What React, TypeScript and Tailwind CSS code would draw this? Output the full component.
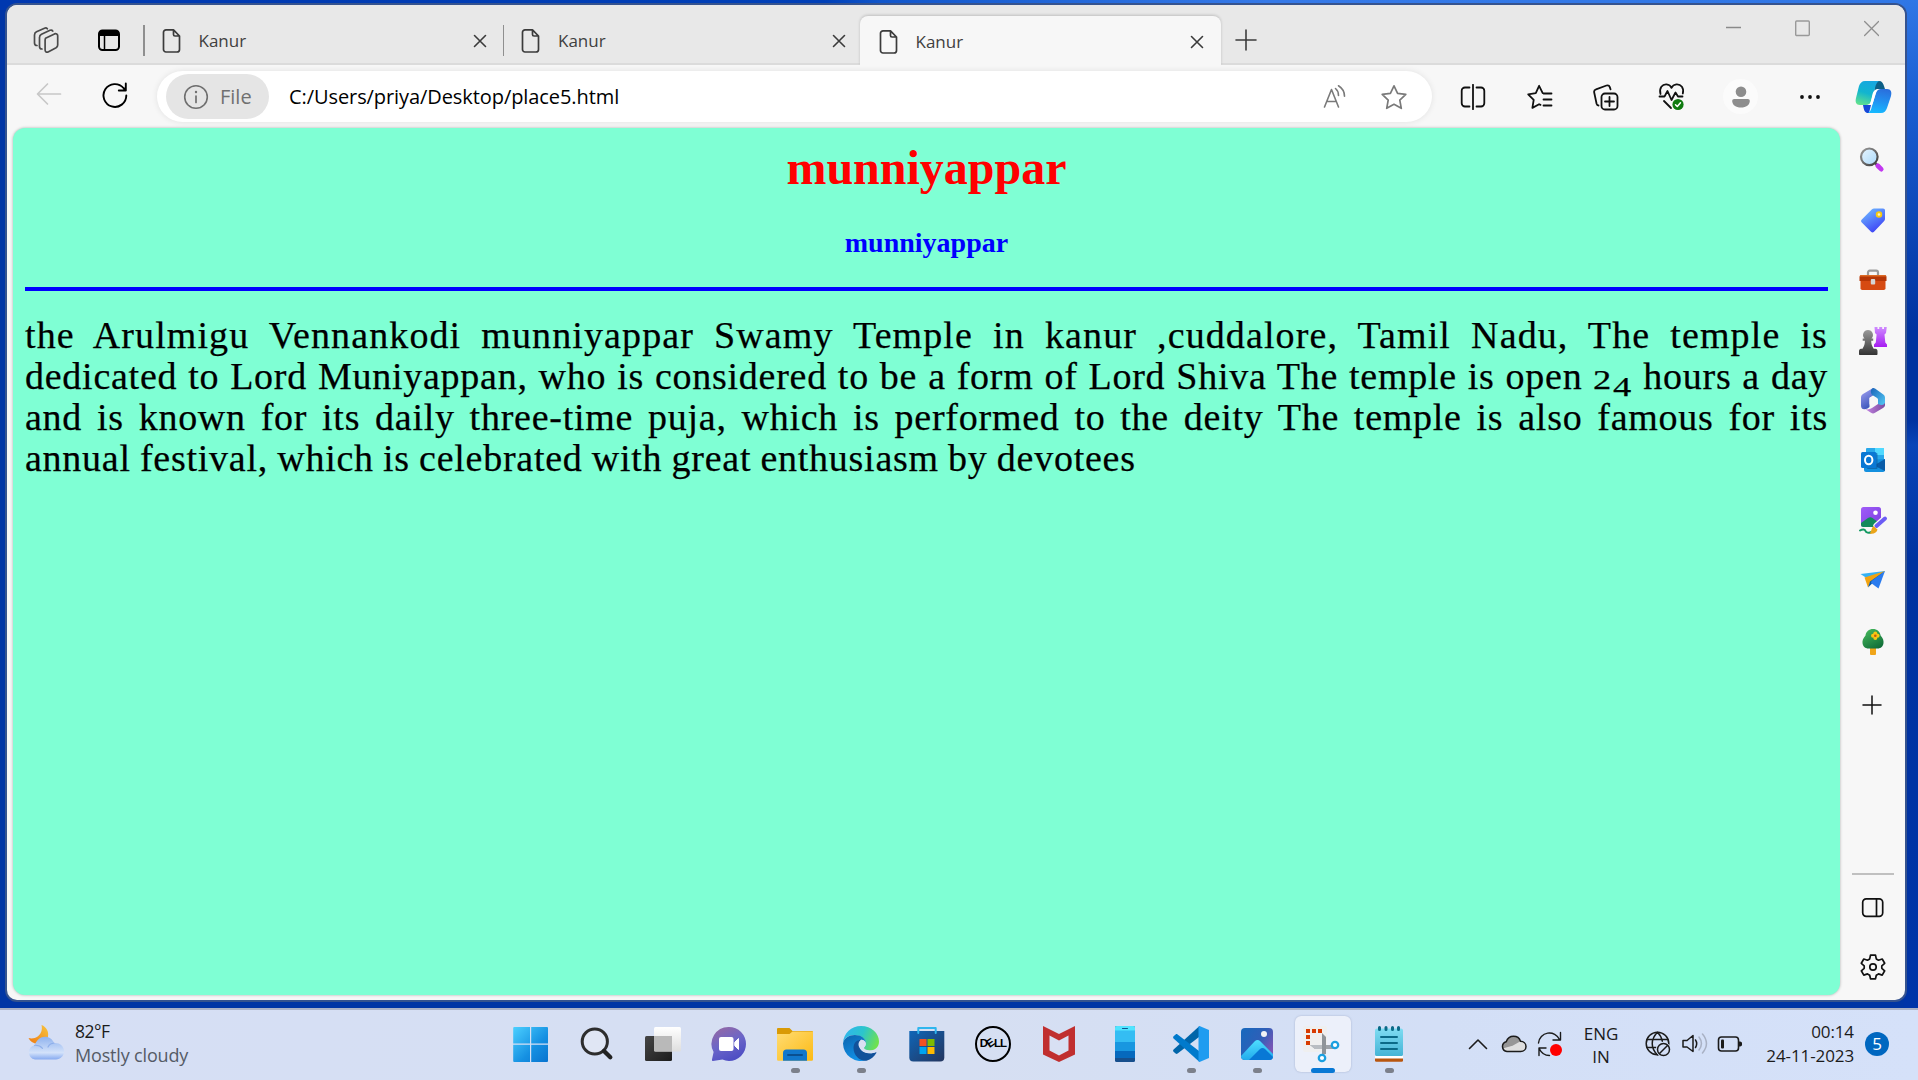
import React from "react";

type SvgProps = { w: number; h: number; className?: string; children: React.ReactNode };

const Svg = ({ w, h, className = "", children }: SvgProps) => (
  <svg
    width={w}
    height={h}
    viewBox={`0 0 ${w} ${h}`}
    fill="none"
    strokeLinecap="round"
    strokeLinejoin="round"
    className={`block shrink-0 ${className}`}
  >
    {children}
  </svg>
);

const UI_FONT = "font-['Open_Sans','Noto_Sans',sans-serif]";

/* ---------- tab strip ---------- */

const FileIcon = () => (
  <Svg w={20} h={26}>
    <path
      d="M4 1.8h7.5l6 6.2v13.500a2.500 2.500 0 0 1-2.500 2.500H4A2.500 2.500 0 0 1 1.500 21.500V4.300A2.500 2.500 0 0 1 4 1.800z M11.500 2v4.500a1.500 1.500 0 0 0 1.500 1.500h4.300"
      stroke="#3b3b3b"
      strokeWidth="1.7"
    />
  </Svg>
);

const TabClose = () => (
  <Svg w={14} h={14}>
    <path d="M1.500 1.500l11 11M12.500 1.500l-11 11" stroke="#3b3b3b" strokeWidth="1.6" />
  </Svg>
);

const TabBody = () => (
  <>
    <FileIcon />
    <span className="ml-[17px] flex-1 text-[17px] leading-6 text-[#3f3f3f]">Kanur</span>
    <TabClose />
  </>
);

const TabStrip = () => (
  <div className="flex h-[60px] items-start bg-[#e8e8e8] shadow-[inset_0_-2px_0_#dbdbdb]">
    <div className="flex h-full items-center pt-[11px]">
      <Svg w={27} h={28} className="ml-[26px]">
        <g stroke="#4a4a4a" strokeWidth="1.700">
          <path d="M12.500 11.200l9-4.300c1.600-.7 3.200.2 3.200 1.900v9.200c0 1.200-.6 2.100-1.600 2.700l-8 4.200c-1.500.7-3-.1-3-1.800v-9.500c0-1 .2-1.800.4-2.400z" />
          <path d="M9 22c-1.800 0-2.500-1-2.500-2.500v-9c0-1.600.6-2.500 2-3.200l8.500-4c1.200-.5 2.200-.2 2.800.8" />
          <path d="M4 18.500c-1.800 0-2.500-1-2.500-2.500V8c0-1.600.6-2.500 2-3.200L11.500 1.200c1.200-.5 2.200-.2 2.800.6" />
        </g>
      </Svg>
      <Svg w={24} h={23} className="ml-[37px]">
        <rect x="2" y="1.500" width="20" height="19.500" rx="3.500" stroke="#000" strokeWidth="2" />
        <path d="M2 4.500A3 3 0 0 1 5 1.500h14a3 3 0 0 1 3 3V7H2z" fill="#000" />
        <path d="M7.500 7v14" stroke="#000" strokeWidth="1.500" />
      </Svg>
      <div className="ml-[22px] h-[31px] w-[1.500px] bg-[#8f8f8f]" />
    </div>
    <div className="flex h-full w-[358px] items-center pl-[17px] pr-[16px] pt-[12px]">
      <TabBody />
    </div>
    <div className="flex h-full w-[357px] items-center pt-[11px]">
      <div className="h-[31px] w-[1.500px] bg-[#8f8f8f]" />
      <div className="flex flex-1 items-center pl-[17px] pr-[14px] pt-px">
        <TabBody />
      </div>
    </div>
    <div className="relative mt-[11px] flex h-[49px] w-[361px] items-center rounded-t-lg bg-[#f7f7f7] pl-[19px] pr-[17px] pt-[2px] shadow-[0_-1px_3px_rgba(0,0,0,0.18)] [clip-path:inset(-4px_-4px_0_-4px)]">
      <TabBody />
    </div>
    <Svg w={22} h={22} className="ml-[14px] mt-6">
      <path d="M11 1v20M1 11h20" stroke="#3b3b3b" strokeWidth="1.600" />
    </Svg>
    <div className="ml-auto mr-[26px] mt-[15px] flex gap-[54px]">
      <Svg w={15} h={17}>
        <path d="M0 7.500h15" stroke="#8a8a8a" strokeWidth="1.300" />
      </Svg>
      <Svg w={15} h={17}>
        <rect x=".7" y="1" width="13.600" height="14.500" rx="1" stroke="#999" strokeWidth="1.400" />
      </Svg>
      <Svg w={15} h={17}>
        <path d="M.6 1.500l14 14M14.600 1.500l-14 14" stroke="#8f8f8f" strokeWidth="1.300" />
      </Svg>
    </div>
  </div>
);

/* ---------- toolbar ---------- */

const CopilotIcon = () => (
  <Svg w={37} h={34}>
    <defs>
      <linearGradient id="cpA" x1=".6" y1="0" x2=".3" y2="1">
        <stop offset="0" stopColor="#17a7e0" />
        <stop offset=".5" stopColor="#12b5cf" />
        <stop offset="1" stopColor="#5fe08f" />
      </linearGradient>
      <linearGradient id="cpB" x1=".6" y1="0" x2=".4" y2="1">
        <stop offset="0" stopColor="#2a6fdc" />
        <stop offset=".5" stopColor="#2190f0" />
        <stop offset="1" stopColor="#16b9ff" />
      </linearGradient>
    </defs>
    <path d="M20 1h4c3 0 4 2 5 5l1 3h-6c-3 0-4 2-5 5z" fill="#0d5f86" />
    <path d="M8 25h8l-2 8h-1c-3 0-4-2-5-8z" fill="#1648d8" />
    <path d="M10 1h14c-2 1-3 3-4 7l-4 13c-1 3-2 4-5 4H5c-4 0-5-3-4-7L4 6c1-3 3-5 6-5z" fill="url(#cpA)" />
    <path d="M26 9h6c4 0 5 3 4 7l-4 12c-1 3-3 5-6 5H13c2-1 3-3 4-7l4-13c1-3 2-4 5-4z" fill="url(#cpB)" />
    <path d="M17.500 14c1-3 2.500-4.500 5-5h3c-3 0-4 2-5 5l-3 10c-.6 1-1 1-2 1h-3c2-.4 3-1.500 3.500-4z" fill="#fff" />
  </Svg>
);

const Toolbar = () => (
  <div className="flex h-[63px] items-center pb-[6px]">
    <Svg w={26} h={24} className="ml-[29px]">
      <path d="M24.500 12H2M11.500 2L1.500 12l10 10" stroke="#c8c8c8" strokeWidth="1.700" />
    </Svg>
    <Svg w={26} h={26} className="ml-[40px] mt-[2px]">
      <path d="M24.300 13.500A11.400 11.400 0 1 1 21.500 6l2.300 2.500M23.800 1.500v7h-7" stroke="#000" strokeWidth="1.900" />
    </Svg>
    <div className="mt-[6px] ml-[29px] flex h-[51px] w-[1275px] items-center rounded-full bg-white pl-[9px] shadow-[0_0_6px_rgba(0,0,0,0.09)]">
      <div className="flex h-[45px] w-[103px] items-center rounded-full bg-[#e5e5e5] pl-[17px]">
        <Svg w={26} h={26}>
          <circle cx="13" cy="13" r="11.300" stroke="#6f6f6f" strokeWidth="1.600" />
          <path d="M13 12v6.500" stroke="#6f6f6f" strokeWidth="1.700" />
          <circle cx="13" cy="8" r="1.200" fill="#6f6f6f" />
        </Svg>
        <span className="ml-[11px] text-[20px] leading-6 text-[#707070]">File</span>
      </div>
      <span className="ml-[20px] flex-1 text-[20px] leading-6 tracking-[-0.08px] text-black">
        C:/Users/priya/Desktop/place5.html
      </span>
      <Svg w={26} h={26}>
        <g stroke="#7a7a7a" strokeWidth="1.600">
          <path d="M2.500 23L9.500 5.500 16.500 23M5 17.500h9" />
          <path d="M13.500 4.500c2 1.600 3 4 3 7M16.500 1.800c3.800 2.400 6 6 6 10.500" />
        </g>
      </Svg>
      <Svg w={28} h={26} className="ml-[32px] mr-[24px]">
        <path
          d="M14 1.800l3.600 7.500 8.200 1.100-6 5.700 1.500 8.200L14 20.300l-7.300 4 1.500-8.200-6-5.700 8.200-1.100z"
          stroke="#7a7a7a"
          strokeWidth="1.700"
        />
      </Svg>
    </div>
    <div className="mt-[6px] flex items-center">
      <Svg w={26} h={26} className="ml-[28px]">
        <path
          d="M9.500 3.500H5A3.300 3.300 0 0 0 1.700 6.800v12.400A3.300 3.300 0 0 0 5 22.500h4.500M16.500 3.500H21a3.300 3.300 0 0 1 3.300 3.300v12.400a3.300 3.300 0 0 1-3.300 3.300h-4.500M13 .8v24.400"
          stroke="#111"
          strokeWidth="1.800"
        />
      </Svg>
      <Svg w={26} h={26} className="ml-[41px]">
        <path
          d="M17.500 9.500l-1.800-.3L12.100 1.800 8.800 9.100l-7.600 1.200 5.500 5.600-1.300 8 6.700-3.700 1.400.7M16.500 9.500h8M16.500 15.500h8M16.500 21.500h8"
          stroke="#111"
          strokeWidth="1.800"
        />
      </Svg>
      <Svg w={26} h={28} className="ml-[40px]">
        <g stroke="#111" strokeWidth="1.800">
          <rect x="8.500" y="10.500" width="16" height="16" rx="3.500" />
          <path d="M16.500 14v9M12 18.500h9" />
          <path d="M5.500 22.500c-1 0-1.600-.6-1.900-1.700L1.200 9.500c-.3-1.500.4-2.700 1.800-3.100L13.500 2.500c1.600-.5 2.800.1 3.300 1.600l.7 2.200" />
        </g>
      </Svg>
      <Svg w={28} h={30} className="ml-[39px]">
        <g stroke="#111" strokeWidth="1.800">
          <path d="M2.500 12C.8 6 4.500 2 8.500 2.300c2.500.2 4.200 1.500 5 3.500.9-2 2.700-3.300 5-3.500 4.500-.3 7.800 3.700 6.300 9.200" />
          <path d="M1.500 14.500h5l3-5.500 4 9 4-7.500 2.500 4h4.500" />
          <path d="M6 19l7 7" />
        </g>
        <circle cx="20" cy="22.500" r="5.600" fill="#0f7b10" />
        <path d="M17.500 22.700l1.800 1.800 3.200-3.800" stroke="#fff" strokeWidth="1.500" />
      </Svg>
      <div className="ml-[37px] flex size-[35px] items-center justify-center rounded-full bg-[#fbfbfb]">
        <Svg w={18} h={22}>
          <circle cx="9" cy="5.800" r="5.300" fill="#8d8d8d" />
          <path d="M2.200 13h13.600a2 2 0 0 1 2 2.200c-.3 3.800-3.500 6.300-8.800 6.300S.5 19 .2 15.200a2 2 0 0 1 2-2.200z" fill="#8d8d8d" />
        </Svg>
      </div>
      <Svg w={22} h={6} className="ml-[41px]">
        <circle cx="3" cy="3" r="1.900" fill="#111" />
        <circle cx="11" cy="3" r="1.900" fill="#111" />
        <circle cx="19" cy="3" r="1.900" fill="#111" />
      </Svg>
      <div className="ml-[34px]">
        <CopilotIcon />
      </div>
    </div>
  </div>
);

/* ---------- page ---------- */

const LineRow = ({ children }: { children: React.ReactNode }) => (
  <span className="block h-[41px] whitespace-nowrap [text-align-last:justify]">{children}</span>
);

const Page = () => (
  <main className="h-[867px] w-[1827px] rounded-xl bg-[#7fffd4] px-3 shadow-[0_0_3px_rgba(0,0,0,0.3)] font-['Liberation_Serif',serif]">
    <h1 className="pt-[12px] text-center text-[48px] font-bold leading-[56px] text-[#ff0000]">munniyappar</h1>
    <h3 className="mt-[31px] text-center text-[28px] font-bold leading-8 text-[#0000ff]">munniyappar</h3>
    <hr className="mt-[28px] h-1 border-0 bg-[#0000ff]" />
    <p className="mt-[24px] text-[38px] leading-[41px] tracking-[0.74px] text-black [word-spacing:-1px] [-webkit-text-stroke:0.25px_black]">
      <LineRow>
        <span className="tracking-[1.1px]">
          the Arulmigu Vennankodi munniyappar Swamy Temple in kanur ,cuddalore, Tamil Nadu, The temple is
        </span>
      </LineRow>
      <LineRow>
        dedicated to Lord Muniyappan, who is considered to be a form of Lord Shiva The temple is open{" "}
        <span className="inline-flex items-baseline text-[27px] leading-none tracking-normal">
          <span className="block w-[20px] origin-left scale-x-[1.35]">2</span>
          <span className="relative top-[7px] block w-[19px] origin-left scale-x-[1.35]">4</span>
        </span>{" "}
        hours a day
      </LineRow>
      <LineRow>and is known for its daily three-time puja, which is performed to the deity The temple is also famous for its</LineRow>
      <span className="block whitespace-nowrap">
        annual festival, which is celebrated with great enthusiasm by devotees
      </span>
    </p>
  </main>
);

/* ---------- sidebar ---------- */

const SideSearch = () => (
  <Svg w={28} h={28}>
    <defs>
      <linearGradient id="ssR" x1="0" y1="0" x2="1" y2="1"><stop stopColor="#9a9a9a" /><stop offset="1" stopColor="#3c3c3c" /></linearGradient>
      <linearGradient id="ssG" x1="0" y1="0" x2="1" y2="1"><stop stopColor="#e8f5ff" /><stop offset="1" stopColor="#a9d9fa" /></linearGradient>
    </defs>
    <path d="M16 17l3 3" stroke="#555" strokeWidth="2.500" />
    <path d="M18.800 19.800l3.400 3.300" stroke="#c239f0" strokeWidth="4.800" />
    <circle cx="10.300" cy="10.800" r="8.300" fill="url(#ssG)" stroke="url(#ssR)" strokeWidth="2.200" />
  </Svg>
);
const SideTag = () => (
  <Svg w={28} h={28}>
    <defs><linearGradient id="stG" x1=".2" y1=".1" x2=".7" y2="1"><stop stopColor="#6ab0ff" /><stop offset="1" stopColor="#3b3df5" /></linearGradient></defs>
    <path d="M15 2.500h9c1.300 0 2 .7 2 2V13c0 .8-.3 1.500-.8 2L15 25.700c-1 1-2 1-3 0l-9.200-9.300c-1-1-1-2 0-3L13 3.300c.6-.6 1.200-.8 2-.8z" fill="url(#stG)" />
    <circle cx="20" cy="8.500" r="2.300" stroke="#f8c90e" strokeWidth="1.900" fill="#fff4c0" />
  </Svg>
);
const SideTools = () => (
  <Svg w={28} h={28}>
    <path d="M9 10V6.500A1.800 1.800 0 0 1 10.800 4.700h6.400A1.800 1.800 0 0 1 19 6.500V10" stroke="#9b9b9b" strokeWidth="2.200" />
    <rect x="1.500" y="10" width="25" height="14" rx="1.800" fill="#d64a12" />
    <path d="M2.500 9h23a2 2 0 0 1 2 2v4H.5v-4a2 2 0 0 1 2-2z" fill="#b53606" />
    <path d="M2.500 9h23a2 2 0 0 1 1.900 1.400H.6A2 2 0 0 1 2.500 9z" fill="#dd6a24" />
    <rect x="11.800" y="13" width="4.400" height="5.500" rx="1" fill="#d5d5d5" />
  </Svg>
);
const SideGames = () => (
  <Svg w={28} h={28}>
    <defs>
      <linearGradient id="sgP" x1="0" y1="0" x2="0" y2="1"><stop stopColor="#9a9a9a" /><stop offset="1" stopColor="#333" /></linearGradient>
      <linearGradient id="sgR" x1="0" y1="0" x2="0" y2="1"><stop stopColor="#cf8cff" /><stop offset="1" stopColor="#a61df2" /></linearGradient>
    </defs>
    <path d="M15.500 0h3v2h1.700V0h3v2H25V0h2.800l-.8 6-1.500 1.500.8 8 1.700 2V20H15v-2.500l1.800-2 .8-8L16 6z" fill="url(#sgR)" />
    <path d="M9 3a5 5 0 0 1 3.500 8.500h1.700v2.300h-2c0 3 .8 5.500 2.500 8h1.800c1.300 0 2 1 2 2.300V27c0 .6-.4 1-1 1H1c-.6 0-1-.4-1-1v-2.900c0-1.300.8-2.300 2-2.300h1.500c1.700-2.500 2.400-5 2.400-8H3.700v-2.300h1.800A5 5 0 0 1 9 3z" fill="url(#sgP)" />
  </Svg>
);
const Side365 = () => (
  <Svg w={28} h={28}>
    <defs>
      <linearGradient id="m3A" x1="0" y1="0" x2=".5" y2="1"><stop stopColor="#a8a5f5" /><stop offset="1" stopColor="#3552b8" /></linearGradient>
      <linearGradient id="m3B" x1="0" y1="0" x2="1" y2="1"><stop stopColor="#1a63b8" /><stop offset="1" stopColor="#57d1fa" /></linearGradient>
      <linearGradient id="m3C" x1="0" y1="0" x2="1" y2="0"><stop stopColor="#cf8ff0" /><stop offset="1" stopColor="#7b4a9d" /></linearGradient>
    </defs>
    <path d="M14 1l-10 6c-1.400.8-2 2-2 3.500v8c0 3 2 5 6.500 3l2-1.500v-9L18 6.500z" fill="url(#m3A)" />
    <path d="M14 1c-3 1.500-3 5 0 8l5 3.200v6c0 3 4 4 7 .5v-8c0-1.500-.6-2.700-2-3.500L16 1.500c-.7-.4-1.300-.6-2-.5z" fill="url(#m3B)" />
    <path d="M3 20l9 5.800c1.400.8 2.700.8 4 0l8-4.800c1.400-.8 2-2 2-3.500v-2c-1 3-4 3-7 1.500l-6 4c-3 2-7 2-10-1z" fill="url(#m3C)" />
    <path d="M10.500 10.700l3.500-2.200 4.500 2.700v5.300L14 19.300l-3.500-2z" fill="#f7f7f7" />
  </Svg>
);
const SideOutlook = () => (
  <Svg w={28} h={28}>
    <rect x="7" y="1" width="18" height="15" rx="1" fill="#28a8ea" />
    <path d="M16 1h9v7h-9z" fill="#50d9ff" />
    <path d="M5 13l21-1v11a2 2 0 0 1-2 2H7a2 2 0 0 1-2-2z" fill="#1490df" />
    <path d="M26 12v12l-11-5.500z" fill="#0a5ca8" />
    <rect x="8" y="6" width="10.500" height="16" rx="1" fill="#064a86" opacity=".5" />
    <rect x="2" y="5" width="15.500" height="16" rx="1.500" fill="#0a78d4" />
    <ellipse cx="9.700" cy="13" rx="3.700" ry="4.200" stroke="#fff" strokeWidth="2" />
  </Svg>
);
const SideImage = () => (
  <Svg w={30} h={28}>
    <defs><linearGradient id="siG" x1="0" y1="0" x2="1" y2="1"><stop stopColor="#a05cf8" /><stop offset="1" stopColor="#7b3fe0" /></linearGradient></defs>
    <rect x="3" y="0" width="20" height="20" rx="2.500" fill="url(#siG)" />
    <path d="M3 16l7-5c1.500-1 3-1 4.500 0l6 4.500-2 4.500h-13A2.500 2.500 0 0 1 3 17.500z" fill="#118a5b" />
    <circle cx="17.500" cy="5.700" r="2.300" fill="#fff" />
    <path d="M2 23.500c3-2 5-1 5.500.5s3 2.500 6 1" stroke="#129962" strokeWidth="2" />
    <path d="M18.500 19l8.500-7.500" stroke="#f7f7f7" strokeWidth="6.500" />
    <path d="M18.500 19l8.500-7.500" stroke="#6b5cf5" strokeWidth="4" />
    <path d="M15.500 19l4 3.500c-.5 3-4 5-8 4 2-1.500 1.500-5 4-7.500z" fill="#eba51a" />
  </Svg>
);
const SideDrop = () => (
  <Svg w={28} h={28}>
    <g transform="translate(0 -1)">
      <path d="M1.500 8L26 5 13 15 7.500 12z" fill="#35b1f2" />
      <path d="M26 5L5.500 11.500l3.500 10 2-5z" fill="#f2a30f" />
      <path d="M26 5L11 15.500l-2 6z" fill="#0b58a8" />
      <path d="M26 5L12.500 15l-.5 2 7.500 5.500z" fill="#2a7bee" />
    </g>
  </Svg>
);
const SideTree = () => (
  <Svg w={28} h={28}>
    <defs><linearGradient id="trG" x1=".2" y1="0" x2=".8" y2="1"><stop stopColor="#44b85c" /><stop offset="1" stopColor="#0f6b37" /></linearGradient></defs>
    <rect x="11" y="19" width="6" height="8" rx="1" fill="#f0a51a" />
    <path d="M14 1c4 0 7 2.500 7.600 6.500C24 10 24.800 12.500 24.500 15c-.4 3.300-2.500 5.500-6 5.500h-9c-3.500 0-5.600-2.200-6-5.500-.3-2.500.7-5 3-7.500C7 3.500 10 1 14 1z" fill="url(#trG)" />
    <g fill="#f9c513"><circle cx="16.300" cy="5.500" r="2" /><circle cx="18.600" cy="7.800" r="2" /><circle cx="16.300" cy="10.100" r="2" /><circle cx="14" cy="7.800" r="2" /></g>
    <circle cx="16.300" cy="7.800" r="1.300" fill="#c65a11" />
  </Svg>
);

const Sidebar = () => (
  <aside className="flex h-[872px] flex-1 flex-col items-center">
    <div className="flex flex-col items-center gap-[32.200px] pt-[18px]">
      <SideSearch />
      <SideTag />
      <SideTools />
      <SideGames />
      <Side365 />
      <SideOutlook />
      <SideImage />
      <SideDrop />
      <SideTree />
      <Svg w={20} h={20} className="mr-[2px] mt-[7px]">
        <path d="M10 1v18M1 10h18" stroke="#111" strokeWidth="1.500" />
      </Svg>
    </div>
    <div className="mt-auto h-[2px] w-[42px] bg-[#c0c0c0]" />
    <Svg w={24} h={22} className="mt-[22px]">
      <rect x="1.700" y="1.800" width="20" height="17.500" rx="3.500" stroke="#111" strokeWidth="1.700" />
      <path d="M15.500 2v17" stroke="#111" strokeWidth="1.700" />
    </Svg>
    <Svg w={26} h={26} className="mb-[20px] mt-[35px]">
      <g stroke="#111" strokeWidth="1.700">
        <path d="M10.500 1.200h5l.8 3.700 2.200 1.300 3.700-1.200 2.500 4.300-2.900 2.500v2.500l2.900 2.500-2.500 4.300-3.700-1.200-2.200 1.300-.8 3.600h-5l-.8-3.600-2.200-1.300-3.700 1.200-2.500-4.300 2.900-2.500v-2.500L1.300 9.300 3.800 5l3.700 1.200 2.200-1.300z" />
        <circle cx="13" cy="13" r="3.200" />
      </g>
    </Svg>
  </aside>
);

/* ---------- taskbar ---------- */

const Start = () => (
  <Svg w={36} h={36}>
    <defs><linearGradient id="wnG" x1="0" y1="0" x2="1" y2="1" ><stop stopColor="#4cd0ff" /><stop offset=".6" stopColor="#1590e2" /><stop offset="1" stopColor="#0873cf" /></linearGradient></defs>
    <path d="M1.200 1H17v16.500H.2V2a1 1 0 0 1 1-1zM18.200 1H34a1 1 0 0 1 1 1v15.500H18.200zM.2 18.700H17V36H1.200a1 1 0 0 1-1-1zM18.200 18.700H35V35a1 1 0 0 1-1 1H18.200z" fill="url(#wnG)" />
  </Svg>
);
const TaskSearch = () => (
  <Svg w={36} h={36}>
    <circle cx="15.800" cy="15.500" r="12.600" stroke="#2d2d2d" strokeWidth="3" fill="#e0e6f4" />
    <path d="M25 25l6.300 6.300" stroke="#222" strokeWidth="4.300" />
  </Svg>
);
const TaskView = () => (
  <Svg w={36} h={36}>
    <defs>
      <linearGradient id="tvA" x1="0" y1="0" x2="1" y2="1"><stop stopColor="#454545" /><stop offset="1" stopColor="#1c1c1c" /></linearGradient>
      <linearGradient id="tvB" x1="0" y1="0" x2="0" y2="1"><stop stopColor="#fff" /><stop offset="1" stopColor="#dedede" /></linearGradient>
    </defs>
    <rect x="0" y="10" width="27" height="25" rx="1.500" fill="url(#tvA)" />
    <rect x="9" y="1" width="27" height="24.500" rx="1.500" fill="url(#tvB)" />
    <path d="M9 10h18v15.500H10.500A1.500 1.500 0 0 1 9 24z" fill="#b9b9b9" />
  </Svg>
);
const Chat = () => (
  <Svg w={36} h={36}>
    <defs><linearGradient id="chG" x1=".1" y1=".1" x2=".5" y2="1"><stop stopColor="#9068a8" /><stop offset=".5" stopColor="#6b66c8" /><stop offset="1" stopColor="#4f4fc4" /></linearGradient></defs>
    <path d="M18 1a17 17 0 1 1 0 34c-2.500 0-4.500-.5-6.500-1.400L2 35c-.8 0-1.200-.6-1-1.400l1.600-7.500A17 17 0 0 1 18 1z" fill="url(#chG)" />
    <rect x="8" y="11" width="14.500" height="14" rx="2" fill="#fff" />
    <path d="M24 16l3.500-3.500V23.500L24 20z" fill="#fff" stroke="#fff" strokeWidth="1" />
  </Svg>
);
const Folder = () => (
  <Svg w={36} h={36}>
    <defs><linearGradient id="foG" x1="0" y1="0" x2="1" y2="1"><stop stopColor="#ffdc73" /><stop offset="1" stopColor="#fcba14" /></linearGradient></defs>
    <path d="M0 3a1 1 0 0 1 1-1h11.500l3 3H35a1 1 0 0 1 1 1v8H0z" fill="#d99a05" />
    <path d="M0 8h12.500l3-2.500H36v28a1.200 1.200 0 0 1-1.200 1.200H1.200A1.200 1.200 0 0 1 0 33.500z" fill="url(#foG)" />
    <path d="M6 34.700V27a3.500 3.500 0 0 1 3.500-3.500h17A3.500 3.500 0 0 1 30 27v7.700z" fill="#1177cc" />
    <path d="M11 29h14" stroke="#0a4f90" strokeWidth="2" />
  </Svg>
);
const Edge = () => (
  <Svg w={36} h={36}>
    <defs>
      <linearGradient id="edA" x1="0" y1=".3" x2="1" y2=".6"><stop stopColor="#2fb5ee" /><stop offset=".5" stopColor="#2cc5cc" /><stop offset="1" stopColor="#70e24b" /></linearGradient>
      <linearGradient id="edB" x1="0" y1="0" x2=".4" y2="1"><stop stopColor="#0c63ad" /><stop offset="1" stopColor="#1290e5" /></linearGradient>
    </defs>
    <path d="M0 17C.5 7 8.500 0 18 0c10.500 0 18 7.500 18 15.500 0 5.500-4 9-8.500 9-3.500 0-6.500-1-6.500-2.500 0-1 1.800-1.500 1.800-4.500 0-5-5-8.500-11-8.500C5.500 9 1 12.500 0 17z" fill="url(#edA)" />
    <path d="M0 17.500C1 12 6 9 11.800 9c6.200 0 11 3.500 11 8-1.400-2.300-3-3.200-4.500-3.200-3.300 0-6.300 3.700-6.300 8 0 6 4.500 11.700 11 12.500A18 18 0 0 1 0 17.500z" fill="url(#edB)" />
    <path d="M18 13.800c-5 0-7.500 4-7.500 8.200 0 7.500 6.500 13.500 13 12.800 4.500-1.500 7.800-4.300 9.800-7.800.4-.7-.1-1-.8-.7-1.800.7-3.300 1-5.200 1-6 0-11-3.500-11-8.500 0-2 .7-4 1.700-5z" fill="#11519a" />
    <path d="M18.300 13.800c-3 1.500-3.500 5-1.800 8 2 3.800 6 5.500 10.500 5.500 2 0 4-.4 5.500-1l.5-2.500c-2 .6-3.700.8-5.500.7-3.500 0-6.500-1-6.500-2.500 0-1 1.800-1.500 1.800-4.500 0-2-2-3.700-4.500-3.700z" fill="#d8e0f3" />
  </Svg>
);
const Store = () => (
  <Svg w={36} h={36}>
    <defs><linearGradient id="msG" x1="0" y1="0" x2="1" y2="1"><stop stopColor="#0f66b8" /><stop offset="1" stopColor="#24355e" /></linearGradient></defs>
    <path d="M.3 5h35v26.500a4 4 0 0 1-4 4h-27a4 4 0 0 1-4-4z" fill="url(#msG)" />
    <path d="M9.300 7V2h17.400v5" stroke="#2fb6ee" strokeWidth="2" />
    <path d="M10.500 13h7v7h-7z" fill="#f25022" /><path d="M18.500 13h7v7h-7z" fill="#7fba00" />
    <path d="M10.500 21h7v7h-7z" fill="#00a4ef" /><path d="M18.500 21h7v7h-7z" fill="#ffb900" />
  </Svg>
);
const Dell = () => (
  <div className="flex size-9 items-center justify-center rounded-full border-2 border-black font-['Liberation_Sans',sans-serif] text-[11.500px] font-bold leading-none tracking-[-0.9px] text-black">
    <span>D</span><span className="-rotate-[35deg]">E</span><span>LL</span>
  </div>
);
const McAfee = () => (
  <Svg w={36} h={36}>
    <path d="M2 0l16 8L34 0v28.500L18 36 2 28.500z" fill="#c02f2f" />
    <path d="M8.500 9.500L18 14.500l9.500-5v15L18 29.500l-9.500-5z" fill="#d8e0f3" />
  </Svg>
);
const Phone = () => (
  <Svg w={36} h={36}>
    <rect x="8" y="0" width="20" height="36" rx="1.500" fill="#174f8c" />
    <path d="M8 25h20v7H8z" fill="#0669bd" /><path d="M8 16h20v9H8z" fill="#1897e0" />
    <path d="M8 4h20v12H8z" fill="#34bdf3" /><path d="M9.500 0h17A1.500 1.500 0 0 1 28 1.500V4.500H8V1.500A1.500 1.500 0 0 1 9.500 0z" fill="#50e4ff" />
    <path d="M15.500 2.500h5" stroke="#14568f" strokeWidth="1" />
  </Svg>
);
const VSCode = () => (
  <Svg w={36} h={36}>
    <path d="M26.500 0L.6 23.600c-.7.7-.7 1.500 0 2.200l2 1.800c.6.5 1.300.5 2 0L26 11z" fill="#0065a9" />
    <path d="M26.500 36L.6 12.400c-.7-.7-.7-1.500 0-2.200l2-1.800c.6-.5 1.300-.5 2 0L26 25z" fill="#007acc" />
    <path d="M26.500 0L36 4v28l-9.500 4c-.8-.4-1-.9-1-1.500v-33c0-.6.200-1.100 1-1.500z" fill="#1f9cf0" />
  </Svg>
);
const Photos = () => (
  <Svg w={36} h={36}>
    <defs>
      <linearGradient id="phA" x1="0" y1="0" x2="1" y2=".6"><stop stopColor="#1769bd" /><stop offset=".6" stopColor="#2f5fb8" /><stop offset="1" stopColor="#7b55b5" /></linearGradient>
      <linearGradient id="phB" x1=".4" y1="0" x2=".5" y2="1"><stop stopColor="#4fe0ff" /><stop offset="1" stopColor="#1ba3ea" /></linearGradient>
      <clipPath id="phC"><rect x="2" y="2" width="32" height="32" rx="4" /></clipPath>
    </defs>
    <g clipPath="url(#phC)">
      <rect x="2" y="2" width="32" height="32" fill="url(#phA)" />
      <path d="M2 30L16 15c1.500-1.500 3.500-1.500 5 0l15 15v6H2z" fill="url(#phB)" />
      <path d="M8 36l13-13c1.500-1.500 3.500-1.500 5 0l9 9v4z" fill="#0878d5" />
    </g>
    <circle cx="25" cy="8" r="3" fill="#f1f2f5" />
  </Svg>
);
const Snip = () => (
  <Svg w={40} h={38}>
    <rect x="0" y="1" width="24" height="26" rx="2" fill="#efefef" />
    <path d="M3 4h4v4H3zM9 4h4v4H9zM15 4h4v4h-4zM3 10h4v4H3zM3 16h4v4H3z" fill="#d83b01" />
    <path d="M19 8l4 4v17l-4 1z" fill="#8f9499" />
    <path d="M7 20h23v4H12z" fill="#8f9499" opacity=".85" />
    <path d="M7 20h12v4h-7z" fill="#b9bdc2" />
    <circle cx="32" cy="20" r="3.200" stroke="#1a9fe0" strokeWidth="2.300" fill="#fff" />
    <circle cx="19" cy="33" r="3.200" stroke="#1a9fe0" strokeWidth="2.300" fill="#fff" />
  </Svg>
);
const Notepad = () => (
  <Svg w={36} h={36}>
    <defs><linearGradient id="npG" x1="0" y1="0" x2="0" y2="1"><stop stopColor="#7fdcf2" /><stop offset="1" stopColor="#45b4d6" /></linearGradient></defs>
    <path d="M4 30h28v4.500a1.300 1.300 0 0 1-1.300 1.300H5.300A1.300 1.300 0 0 1 4 34.500z" fill="#b8560f" />
    <path d="M4 28h28v4.500H4z" fill="#fff" />
    <path d="M6 2.500h24a2 2 0 0 1 2 2v24a1.500 1.500 0 0 1-1.500 1.500h-25A1.500 1.500 0 0 1 4 28.500v-24a2 2 0 0 1 2-2z" fill="url(#npG)" />
    <path d="M8.500 1.500v2M15 1.500v2M21.500 1.500v2M27.500 1.500v2" stroke="#0b6a88" strokeWidth="3" />
    <path d="M10 11h16M10 17h16M10 23h16" stroke="#0b6a88" strokeWidth="2" />
  </Svg>
);

type App = { name: string; icon: React.ReactNode; state?: "open" | "active" };

const apps: App[] = [
  { name: "start", icon: <Start /> },
  { name: "search", icon: <TaskSearch /> },
  { name: "taskview", icon: <TaskView /> },
  { name: "chat", icon: <Chat /> },
  { name: "explorer", icon: <Folder />, state: "open" },
  { name: "edge", icon: <Edge />, state: "open" },
  { name: "store", icon: <Store /> },
  { name: "dell", icon: <Dell /> },
  { name: "mcafee", icon: <McAfee /> },
  { name: "phone", icon: <Phone /> },
  { name: "vscode", icon: <VSCode />, state: "open" },
  { name: "photos", icon: <Photos />, state: "open" },
  { name: "snip", icon: <Snip />, state: "active" },
  { name: "notepad", icon: <Notepad />, state: "open" },
];

const TaskItem = ({ icon, state }: App) => (
  <div className="flex h-full w-[66px] items-center justify-center">
    <div
      className={`relative flex size-14 items-center justify-center rounded-md ${
        state === "active" ? "bg-[#ecf0fa] shadow-[0_0_2px_rgba(90,100,140,0.4)]" : ""
      }`}
    >
      {icon}
      {state === "open" && <div className="absolute bottom-[-1px] h-[5px] w-[9px] rounded-full bg-[#7c808b]" />}
      {state === "active" && <div className="absolute bottom-[-1px] h-[5px] w-6 rounded-full bg-[#0878d4]" />}
    </div>
  </div>
);

const Weather = () => (
  <Svg w={38} h={38}>
    <defs>
      <linearGradient id="weM" x1="1" y1="0" x2="0" y2="1"><stop stopColor="#f7c53f" /><stop offset="1" stopColor="#f07a12" /></linearGradient>
      <linearGradient id="weC" x1="0" y1="0" x2="0" y2="1"><stop stopColor="#8fb2ee" /><stop offset=".7" stopColor="#d3e2fa" /><stop offset="1" stopColor="#86aaf0" /></linearGradient>
    </defs>
    <path d="M14.500 1c5 2 7.500 6.500 6.500 11.500-1 5-5.500 8-10.500 7.500C6 19.500 3 17 1.500 14c3 .8 6.500.5 9.500-1.800 3.500-2.700 4.500-7 3.500-11.200z" fill="url(#weM)" />
    <path d="M8 35.500a7.300 7.300 0 0 1-.3-14.300C9.500 16 13.500 12.800 18 12.800c4.300 0 7.500 2.500 9 6.200 5.500-.5 10 3 10 8.300 0 4.700-3.500 8.200-8 8.200z" fill="url(#weC)" />
    <path d="M7.500 21.300c4-.3 6.500 1.200 8 3M27 19c-3 .3-5 2-6 4" stroke="#7ea3e6" strokeWidth="1.200" opacity=".7" />
  </Svg>
);

const Taskbar = () => (
  <footer className="flex h-[72px] items-start border-t-2 border-[#aab1c6] bg-[linear-gradient(90deg,#d6dff5,#d6dff2_50%,#d3dff6_75%,#d5e1f9)] text-[17px] leading-6 text-[#1b1b1b]">
    <div className="flex w-[498px] pl-[27px] pt-[14px]">
      <Weather />
      <div className="-mt-[5px] ml-[10px]">
        <div className="text-[17.500px] tracking-[-0.5px]">82°F</div>
        <div className="text-[18px] tracking-[-0.17px] text-[#555b66]">Mostly cloudy</div>
      </div>
    </div>
    <div className="flex h-[68px]">
      {apps.map((a) => (
        <TaskItem key={a.name} {...a} />
      ))}
    </div>
    <div className="flex h-[68px] flex-1 items-center pl-[46px]">
      <Svg w={20} h={12}>
        <path d="M1.500 10.500L10 2l8.500 8.500" stroke="#1b1b1b" strokeWidth="1.600" />
      </Svg>
      <Svg w={26} h={18} className="ml-[13px]">
        <path d="M6 16.500a5 5 0 0 1-.8-9.800C6.500 3.300 9.300 1.300 12.500 1.300c3.300 0 6 1.900 7 4.900 3 .1 5.500 2.200 5.500 5.200s-2.300 5.100-5.300 5.100z" fill="#dedede" />
        <path d="M1.500 13.500C.5 9 3 7 5.200 6.700 6.500 3.300 9.300 1.300 12.500 1.300c3.300 0 6 1.900 7 4.900l-8 4.600z" fill="#969696" />
        <path d="M6 16.500a5 5 0 0 1-.8-9.800C6.500 3.300 9.300 1.300 12.500 1.300c3.300 0 6 1.900 7 4.900 3 .1 5.500 2.200 5.500 5.200s-2.300 5.100-5.300 5.100z" stroke="#1b1b1b" strokeWidth="1.500" />
      </Svg>
      <Svg w={26} h={26} className="ml-[10px]">
        <path d="M1.500 12A11 11 0 0 1 22.500 8.500M23.500 1.500v7.500h-7.500M2 24.500V17h7M2.500 18a11 11 0 0 0 10 6.500" stroke="#1b1b1b" strokeWidth="1.400" />
        <circle cx="19" cy="19" r="6" fill="#ff0000" />
      </Svg>
      <div className="ml-[18px] w-[40px] pt-px text-center leading-[23px]">
        <div>ENG</div>
        <div>IN</div>
      </div>
      <Svg w={26} h={26} className="ml-[24px]">
        <g stroke="#1b1b1b" strokeWidth="1.500">
          <circle cx="12.500" cy="12.500" r="11.300" />
          <path d="M12.500 1.200c-7 7-7 16 0 22.600M12.500 1.200c2.600 2.600 4.200 5.500 4.800 9M2 8.500h21M2 16.500h9" />
        </g>
        <circle cx="18.500" cy="18.500" r="7.500" fill="#d4dff6" />
        <circle cx="18.500" cy="18.500" r="6" stroke="#1b1b1b" strokeWidth="1.500" />
        <path d="M14.500 22.500l8-8" stroke="#1b1b1b" strokeWidth="1.500" />
      </Svg>
      <Svg w={26} h={24} className="ml-[11px]">
        <path d="M1 8.500h4L11 3.500v16L5 15H1z" stroke="#1b1b1b" strokeWidth="1.500" />
        <path d="M13.500 8c1.500 2.300 1.500 5 0 7.500" stroke="#1b1b1b" strokeWidth="1.500" />
        <path d="M17 5c3 4 3 9 0 13M20.500 2c5 6 5 13 0 19" stroke="#a9b1c4" strokeWidth="1.500" />
      </Svg>
      <Svg w={26} h={18} className="ml-[9px]">
        <rect x="1.500" y="2" width="20" height="14" rx="3" stroke="#1b1b1b" strokeWidth="1.600" />
        <path d="M22 6.500h1a2 2 0 0 1 2 2.500 2 2 0 0 1-2 2.500h-1z" fill="#1b1b1b" />
        <rect x="4" y="4.500" width="3" height="9" rx="1" fill="#1b1b1b" />
      </Svg>
      <div className="-mt-[1px] ml-auto text-right tracking-[-0.1px]">
        <div>00:14</div>
        <div>24-11-2023</div>
      </div>
      <div className="ml-[11px] mr-[29px] flex size-6 items-center justify-center rounded-full bg-[#0067c0] text-[17px] text-white">
        5
      </div>
    </div>
  </footer>
);

export default function App() {
  return (
    <div
      className={`h-[1080px] w-[1918px] overflow-hidden bg-[linear-gradient(180deg,transparent_0,transparent_10px,#0035a5_10px),linear-gradient(90deg,#0038b0_0%,#0040b8_43%,#1156cb_46%,#3579e8_66%,#3077e6_100%)] ${UI_FONT}`}
    >
      <div className="flex h-[1008px] w-full items-start bg-[linear-gradient(180deg,#3077e6,#1a5ed2_100px,#0032a0_330px,#0032a0_420px,#0844b8_445px,#0032a0_560px,#0034a8)] bg-[length:14px_100%] bg-right bg-no-repeat pl-[7px] pt-[5px]">
        <div className="h-[995px] w-[1898px] overflow-hidden rounded-[10px] bg-[#f7f7f7] shadow-[0_0_0_2px_#35538f]">
          <TabStrip />
          <Toolbar />
          <div className="flex items-start pl-[6px]">
            <Page />
            <Sidebar />
          </div>
        </div>
      </div>
      <Taskbar />
    </div>
  );
}
